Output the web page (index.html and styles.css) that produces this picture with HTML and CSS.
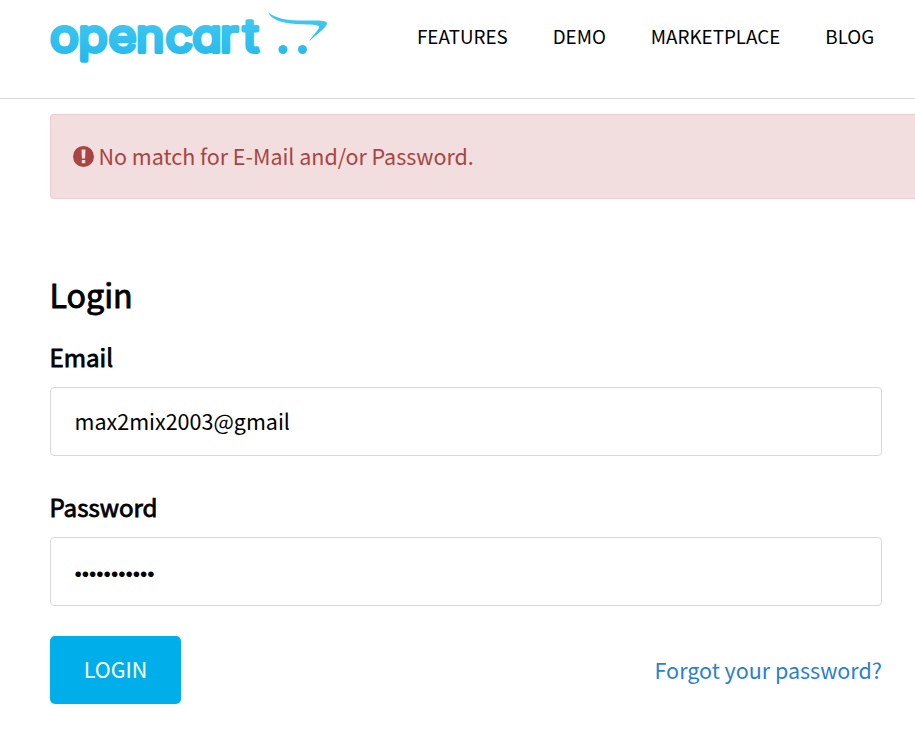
FILE: index.html
```html
<!DOCTYPE html>
<html lang="en">
<head>
<meta charset="utf-8">
<title>OpenCart - Account Login</title>
<link rel="stylesheet" href="styles.css">
</head>
<body>
<header class="header">
  <a class="logo" href="#" aria-label="OpenCart">
    <svg width="280" height="60" viewBox="49 8 280 60">
      <defs>
        <linearGradient id="brand" gradientUnits="userSpaceOnUse" x1="0" y1="12" x2="0" y2="64">
          <stop offset="0" stop-color="#44caf0"/>
          <stop offset="1" stop-color="#23b7ed"/>
        </linearGradient>
      </defs>
      <g transform="translate(49 0) scale(1.070 1)">
        <text class="wordmark" y="51.700" x="1 27.300 55.500 81.300 108.900 133.800 159.800 181.300">opencart</text>
      </g>
      <path fill="url(#brand)" d="M268 12C276 19 288 20.500 305 20.500C318 20.500 327 20 327 23.500C327 27 317 34 309 41.500C313 35 320 28.500 319 26.500C317 24 306 25 296 24C281 23 271 19.500 268 12Z"/>
      <circle fill="url(#brand)" cx="283" cy="49.500" r="4.500"/>
      <circle fill="url(#brand)" cx="302.500" cy="49.500" r="4.500"/>
    </svg>
  </a>
  <nav class="nav">
    <a href="#">FEATURES</a>
    <a href="#">DEMO</a>
    <a href="#">MARKETPLACE</a>
    <a href="#">BLOG</a>
  </nav>
</header>
<main class="page">
  <div class="alert">
    <svg class="alert-icon" width="21" height="21" viewBox="0 0 21 21">
      <circle cx="10.500" cy="10.500" r="10.500" fill="#a94442"/>
      <path d="M8.500 3.500h4l-.4 9h-3.200zM8.800 14h3.400v3.200h-3.400z" fill="#f2dede"/>
    </svg>
    <span class="alert-text">No match for E-Mail and/or Password.</span>
  </div>
  <form class="login">
    <h1 class="title">Login</h1>
    <label class="label" for="email">Email</label>
    <input class="field" id="email" type="text" value="max2mix2003@gmail">
    <label class="label" for="password">Password</label>
    <input class="field secret" id="password" type="password" value="abcdefghijk">
    <div class="actions">
      <button class="button" type="button">LOGIN</button>
      <a class="forgot" href="#">Forgot your password?</a>
    </div>
  </form>
</main>
</body>
</html>
```
FILE: styles.css
```css
* { box-sizing: border-box; }
body {
  margin: 0;
  background: #fff;
  color: #000;
  font-family: "Noto Sans CJK SC", "Noto Sans", sans-serif;
  font-size: 21.5px;
  line-height: 32px;
}
a { text-decoration: none; color: inherit; }
.header {
  height: 99px;
  display: flex;
  align-items: flex-start;
  padding: 8px 0 0 49px;
  border-bottom: 1px solid #d9d9d9;
}
.logo, .logo svg { display: block; }
.wordmark {
  font-family: Inter, sans-serif;
  font-size: 45px;
  font-weight: 400;
  font-feature-settings: "cv11";
  fill: url(#brand);
  stroke: url(#brand);
  stroke-width: 4px;
  stroke-linejoin: round;
  stroke-linecap: round;
}
.nav {
  display: flex;
  gap: 45px;
  margin: 12px 0 0 88px;
  font-size: 18.8px;
  white-space: nowrap;
}
.page { padding: 15px 0 0 50px; }
.alert {
  display: flex;
  align-items: center;
  gap: 5px;
  height: 85px;
  padding-left: 22px;
  border: 1px solid #ebccd1;
  border-right: 0;
  border-radius: 4px 0 0 4px;
  background: #f2dede;
  color: #a94442;
}
.alert-text { margin: -2px 0 0 -0.5px; letter-spacing: -0.02px; }
.login { width: 832px; padding-top: 72px; }
.title {
  margin: 0 0 24px -0.5px;
  font-size: 32.2px;
  line-height: 46px;
  font-weight: 400;
  -webkit-text-stroke: 0.9px #000;
}
.label {
  display: block;
  font-size: 24.1px;
  line-height: 32px;
  margin: 0 0 14px -0.5px;
  -webkit-text-stroke: 0.8px #000;
}
.field {
  display: block;
  width: 100%;
  height: 69px;
  margin-bottom: 35px;
  padding: 0 23.5px 2px;
  border: 1px solid #d9d9d9;
  border-radius: 4px;
  outline: 0;
  background: #fff;
  color: #000;
  font: inherit;
}
.secret {
  margin-bottom: 30px;
  padding-top: 4px;
  padding-bottom: 0;
  font-family: "Liberation Sans", sans-serif;
  font-size: 20.8px;
}
.actions { display: flex; justify-content: space-between; align-items: center; }
.button {
  width: 131px;
  height: 68px;
  padding: 0 0 2px;
  border: 0;
  border-radius: 5px;
  background: #00afea;
  color: #fff;
  font: inherit;
}
.forgot { color: #2a7fd0; }
```
